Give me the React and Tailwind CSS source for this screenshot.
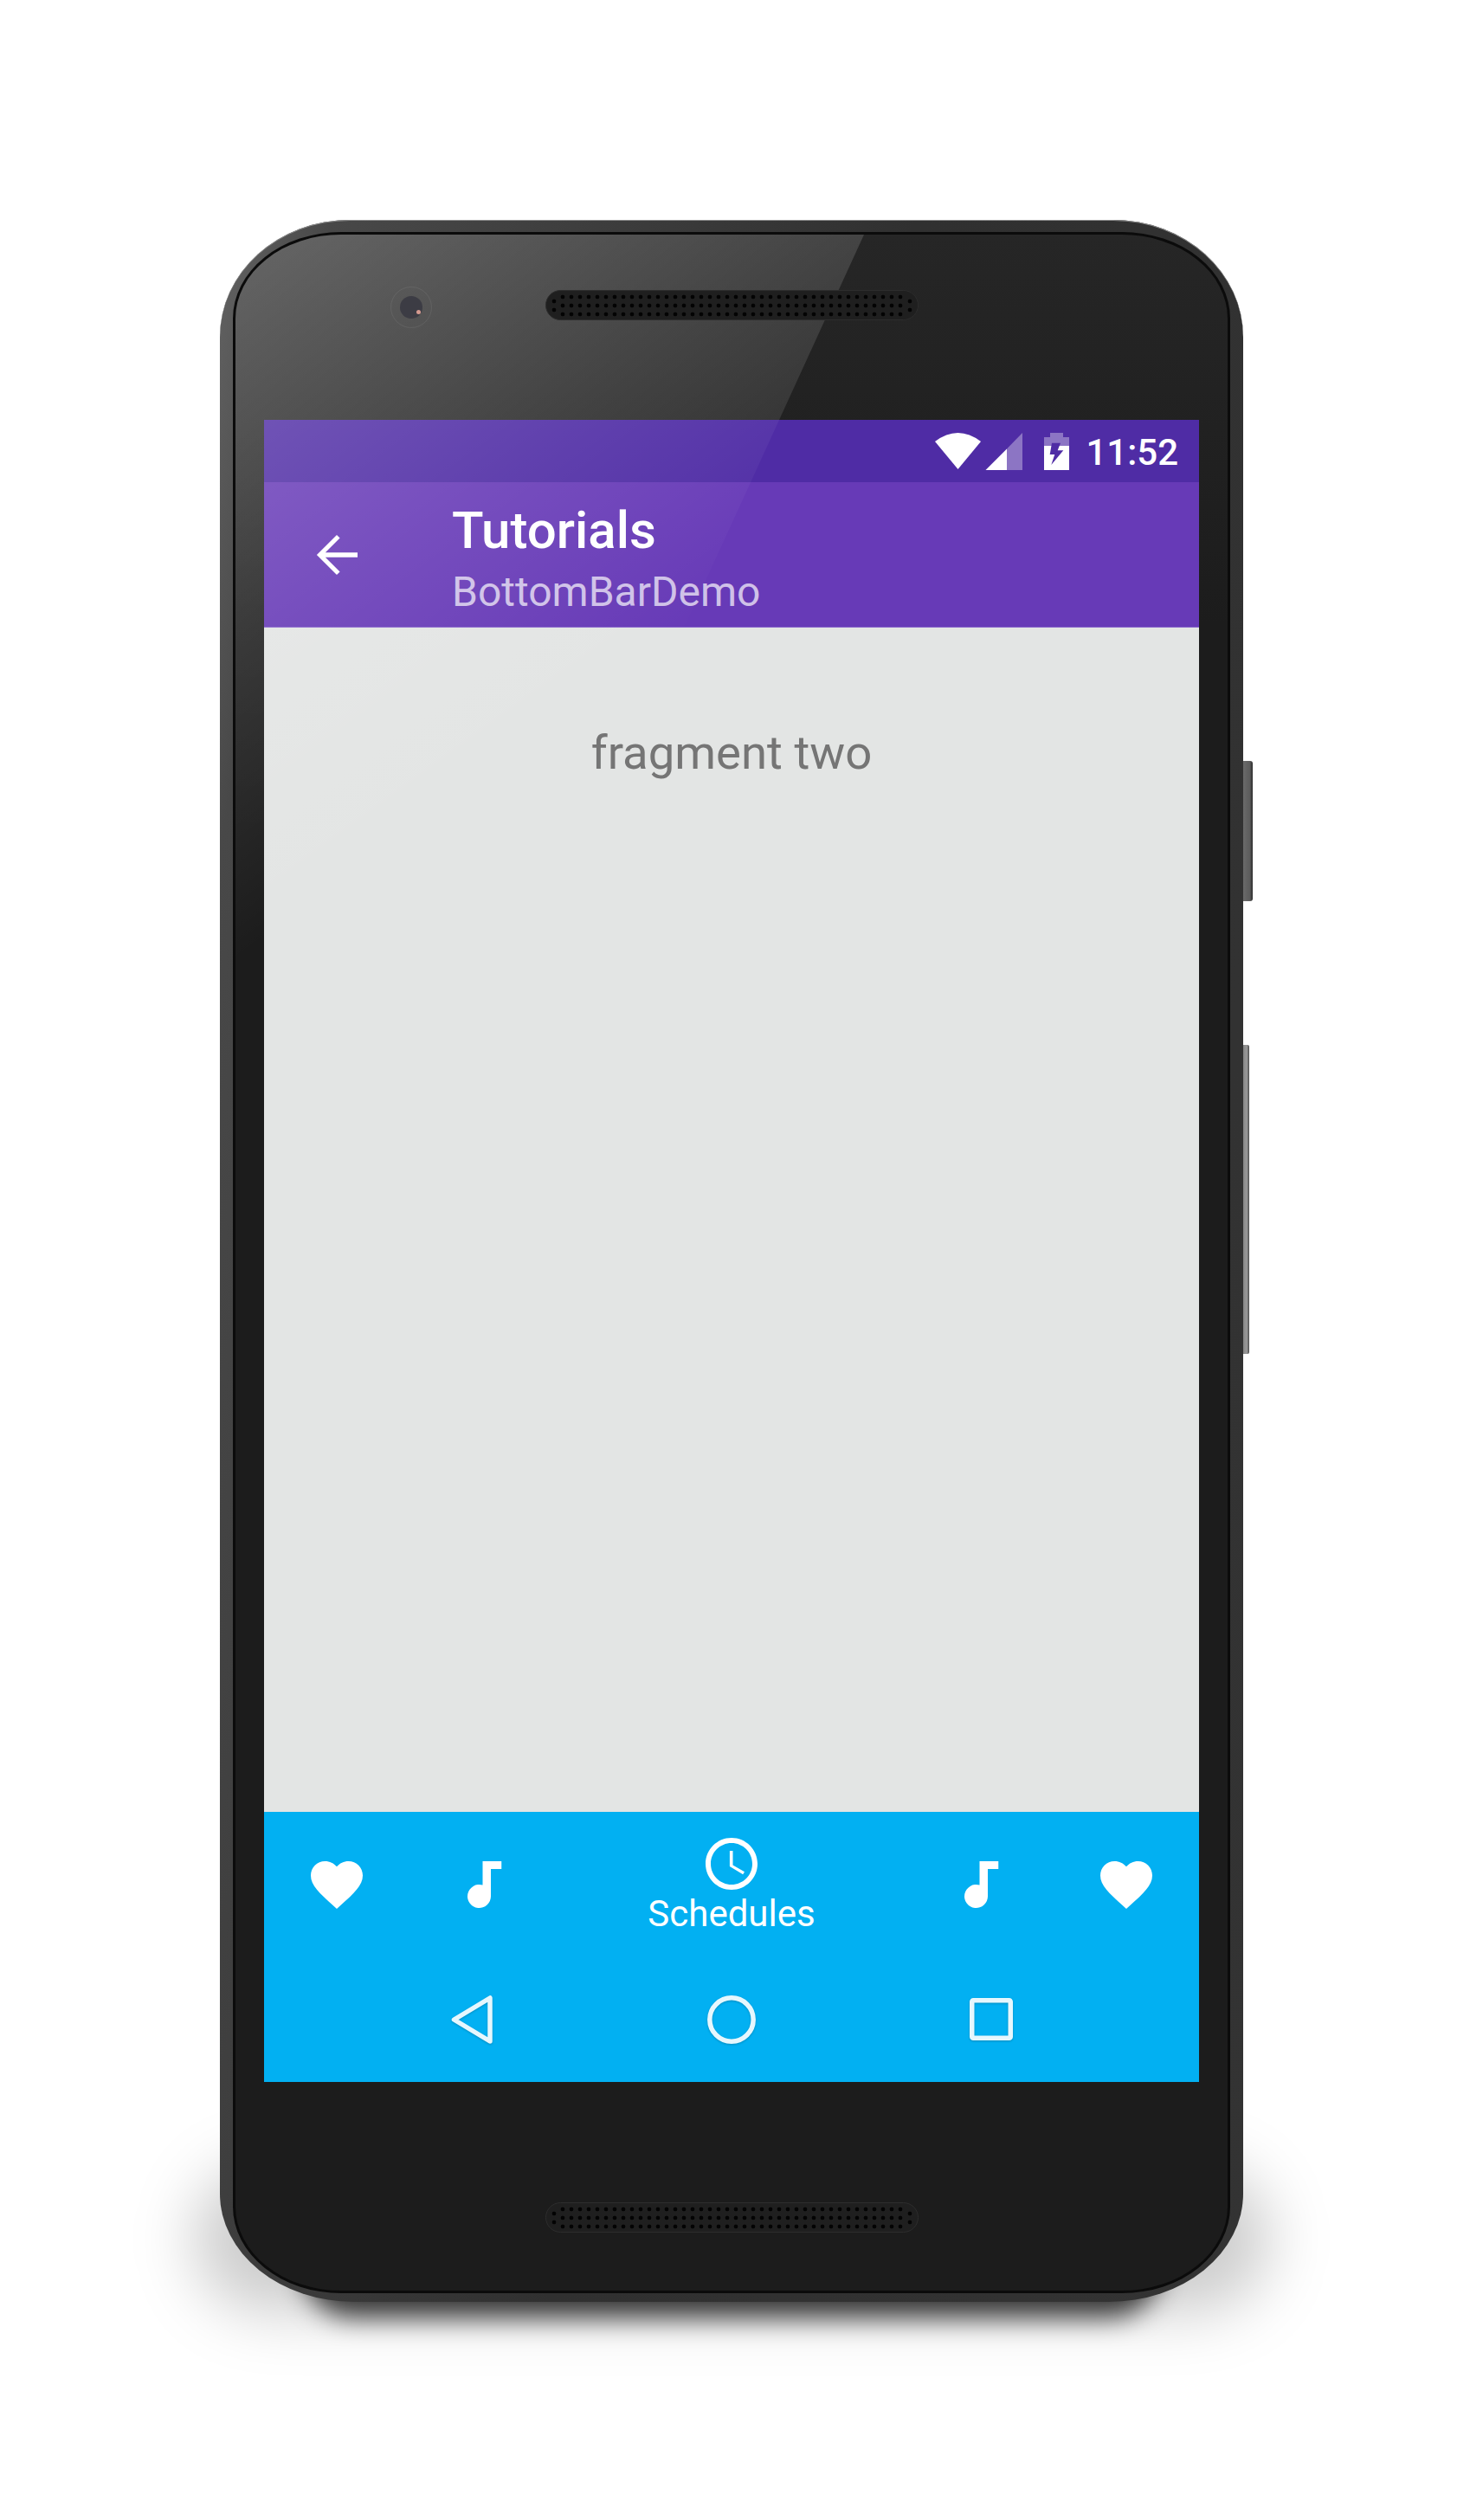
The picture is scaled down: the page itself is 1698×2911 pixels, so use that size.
const HEART = 'M12 21.35l-1.45-1.32C5.4 15.36 2 12.28 2 8.5 2 5.42 4.42 3 7.5 3c1.74 0 3.41.81 4.5 2.09C13.09 3.81 14.76 3 16.5 3 19.58 3 22 5.42 22 8.5c0 3.78-3.4 6.86-8.55 11.54L12 21.35z';

const Heart = () => (
  <svg viewBox="0 0 24 24" className="w-[72px] h-[72px] fill-white">
    <path d={HEART} />
  </svg>
);

const Note = () => (
  <svg viewBox="0 0 72 72" className="w-[72px] h-[72px] fill-white">
    <path d="M35.5 9h21.75v9H45v31.5a13.5 13.5 0 1 1-9.5-12.9z" />
  </svg>
);

const Clock = () => (
  <svg viewBox="0 0 24 24" className="w-[72px] h-[72px] fill-white">
    <path d="M11.99 2C6.47 2 2 6.48 2 12s4.47 10 9.99 10C17.52 22 22 17.52 22 12S17.52 2 11.99 2zM12 20c-4.42 0-8-3.58-8-8s3.58-8 8-8 8 3.58 8 8-3.58 8-8 8z" />
    <path d="M12.5 7H11.3v6l5.1 3.1.6-1-4.5-2.6z" />
  </svg>
);

const Speaker = () => (
  <div className="relative z-10 flex items-center w-[431px] h-[35px] px-[4px] rounded-[18px] bg-[#1f1f1f] border border-[#2d2d2d]">
    <div className="w-[10px] h-[20px] bg-[radial-gradient(circle,#030303_2px,transparent_2.7px)] bg-[length:10px_10px]" />
    <div className="flex-1 h-[30px] bg-[radial-gradient(circle,#030303_2px,transparent_2.7px)] bg-[length:10px_10px]" />
    <div className="w-[10px] h-[20px] bg-[radial-gradient(circle,#030303_2px,transparent_2.7px)] bg-[length:10px_10px]" />
  </div>
);

const StatusBar = () => (
  <div className="flex h-[72px] pt-[14px] pr-[24px] justify-end items-start bg-[#4f2ca5]">
    <svg viewBox="0 0 53 44" className="w-[53px] h-[44px] fill-white">
      <path d="M26.5 43L0 11Q26.5-9 53 11z" />
    </svg>
    <svg viewBox="0 0 44 45" className="ml-[5px] w-[44px] h-[45px] fill-white">
      <path opacity="0.35" d="M25 19.5L43 1V44H25z" />
      <path d="M.5 44L25 19.5V44z" />
    </svg>
    <svg viewBox="0 0 29 44" className="ml-[24px] w-[29px] h-[44px] fill-white">
      <path opacity="0.35" d="M7 1h15v5h7v10H0V6h7z" />
      <path d="M0 16h29v28H0z" />
      <path className="fill-[#4f2ca5]" d="M9 12.7h10l-3.3 8.6h6.6L8.3 38l4-12H6.7z" />
    </svg>
    <span className="ml-[19px] text-[42px] leading-[72px] -mt-[12px] font-medium text-white">11:52</span>
  </div>
);

const AppBar = () => (
  <div className="flex h-[168px] bg-[#673ab7] border-b border-[#8a68cc]">
    <svg viewBox="0 0 24 24" className="ml-[48px] mt-[48px] w-[72px] h-[72px] fill-white">
      <path d="M20 11.1H7.6l5.6-5.6L12 4.3 4.3 12l7.7 7.7 1.2-1.2-5.6-5.6H20z" />
    </svg>
    <div className="ml-[97px] pt-[24px] flex flex-col">
      <span className="text-[60px] leading-[64px] font-medium text-white">Tutorials</span>
      <span className="mt-[11px] text-[48px] leading-[56px] text-white/70">BottomBarDemo</span>
    </div>
  </div>
);

const BottomBar = () => (
  <div className="flex flex-col bg-[#02b0f2]">
    <div className="flex h-[168px] text-white">
      <div className="w-[168px] flex items-center justify-center"><Heart /></div>
      <div className="w-[170px] flex items-center justify-center"><Note /></div>
      <div className="flex-1 flex flex-col items-center pt-[24px]">
        <Clock />
        <span className="-mt-[2px] text-[42px] leading-[48px]">Schedules</span>
      </div>
      <div className="w-[170px] flex items-center justify-center"><Note /></div>
      <div className="w-[168px] flex items-center justify-center"><Heart /></div>
    </div>
    <div className="flex h-[144px] items-center justify-center">
      <div className="w-[300px] flex justify-center">
        <svg viewBox="0 0 72 72" className="w-[72px] h-[72px] fill-none stroke-[#e6f7fe] stroke-[5.5] drop-shadow-[0_1px_1px_rgba(0,0,0,0.2)]">
          <path strokeLinejoin="round" d="M15.5 36L57 11V61z" />
        </svg>
      </div>
      <div className="w-[300px] flex justify-center">
        <svg viewBox="0 0 72 72" className="w-[72px] h-[72px] fill-none stroke-[#e6f7fe] stroke-[5.5] drop-shadow-[0_1px_1px_rgba(0,0,0,0.2)]">
          <circle cx="36" cy="36" r="25.2" />
        </svg>
      </div>
      <div className="w-[300px] flex justify-center">
        <svg viewBox="0 0 72 72" className="w-[72px] h-[72px] fill-none stroke-[#e6f7fe] stroke-[5.5] drop-shadow-[0_1px_1px_rgba(0,0,0,0.2)]">
          <rect x="13.75" y="13.75" width="44.5" height="43.5" rx="1.5" />
        </svg>
      </div>
    </div>
  </div>
);

export default function App() {
  return (
    <div className="relative isolate min-h-[2911px] bg-white pt-[254px] pl-[254px] [font-family:Roboto,sans-serif]">
      <div className="relative w-[1182px] h-[2405px]">
        {/* floor shadow */}
        <div className="absolute -z-10 -left-[30px] -right-[30px] -bottom-[12px] h-[170px] rounded-[120px] bg-black/20 blur-[35px]" />
        <div className="absolute -z-10 left-[95px] right-[95px] -bottom-[18px] h-[120px] rounded-[100px] bg-black/75 blur-[15px]" />

        {/* side buttons */}
        <div className="absolute left-full top-[625px] w-[11px] h-[162px] rounded-r-[3px] bg-[linear-gradient(90deg,#6a6a6a,#5c5c5c_70%,#2a2a2a)]" />
        <div className="absolute left-full top-[953px] w-[7px] h-[357px] rounded-r-[2px] bg-[linear-gradient(90deg,#858585,#9a9a9a_60%,#4a4a4a)]" />

        <div className="w-full h-full pt-[14px] px-[15px] pb-[10px] rounded-[150px_150px_155px_155px/135px_135px_125px_125px] bg-[linear-gradient(100deg,#636363,#484848_8%,#303030_50%,#333333)] shadow-[inset_0_1px_0_#8a8a8a]">
          <div className="relative flex flex-col h-full overflow-hidden rounded-[125px/100px] border-[3px] border-[#0b0b0b] bg-[linear-gradient(180deg,#262626,#1c1c1c_450px)]">
            {/* top bezel */}
            <div className="flex items-start h-[214px] pt-[60px]">
              <div className="relative z-10 ml-[179px] w-[48px] h-[48px] flex items-center justify-center rounded-full border border-white/[0.07]">
                <div className="relative w-[26px] h-[26px] rounded-full bg-[#3c3c44]">
                  <div className="absolute right-[2px] bottom-[5px] w-[5px] h-[5px] rounded-full bg-[#d59a90]" />
                </div>
              </div>
              <div className="mt-[4px] ml-[131px]">
                <Speaker />
              </div>
            </div>

            {/* screen */}
            <div className="flex flex-col h-[1920px] mx-[33px]">
              <StatusBar />
              <AppBar />
              <div className="flex-1 flex justify-center bg-[#e3e5e4] pt-[112px]">
                <span className="text-[54.5px] leading-[64px] text-[#757575]">fragment two</span>
              </div>
              <BottomBar />
            </div>

            {/* bottom bezel */}
            <div className="flex-1 pt-[139px] pl-[358px]">
              <Speaker />
            </div>

            {/* glass reflection */}
            <div className="absolute left-0 top-0 w-[1146px] h-[1029px] pointer-events-none [clip-path:polygon(0_0,726px_0,628px_214px,33px_214px,33px_1029px,0_1029px)] bg-[linear-gradient(180deg,rgba(255,255,255,0.05)_214px,rgba(255,255,255,0)_700px)]" />
            <div className="absolute left-0 top-0 w-[1146px] h-[1100px] pointer-events-none [clip-path:polygon(0_0,726px_0,255px_1029px,0_1029px)] bg-[linear-gradient(144deg,rgba(255,255,255,0.26)_0px,rgba(255,255,255,0.16)_250px,rgba(255,255,255,0.1)_400px,rgba(255,255,255,0)_680px)]" />
          </div>
        </div>
      </div>
    </div>
  );
}
